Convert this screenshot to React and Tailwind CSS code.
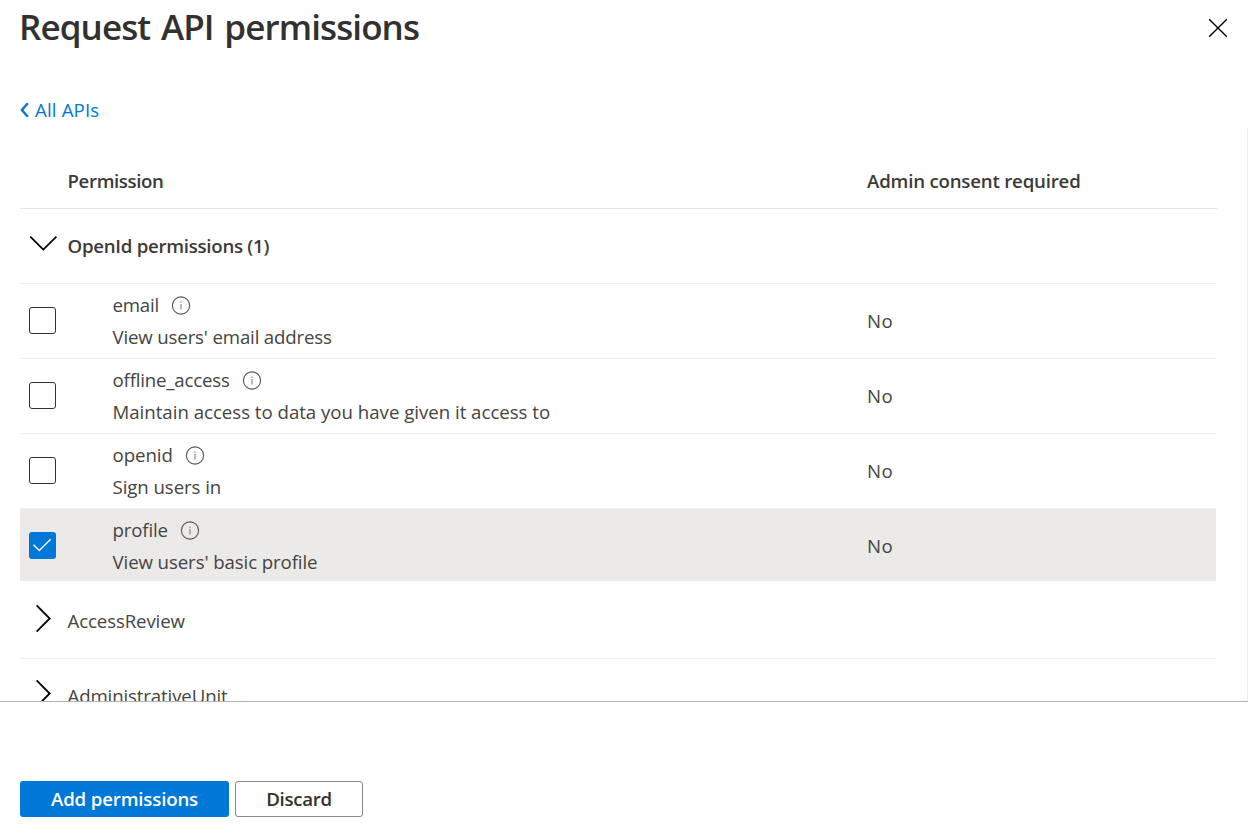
import { useState } from "react";

const scopes = [
  { name: "email", description: "View users' email address", nameClass: "tracking-[-0.2px]", descriptionClass: "tracking-[-0.16px]" },
  { name: "offline_access", description: "Maintain access to data you have given it access to", nameClass: "tracking-[-0.18px]", descriptionClass: "tracking-[-0.02px]" },
  { name: "openid", description: "Sign users in", nameClass: "tracking-[-0.05px]", descriptionClass: "tracking-[-0.08px]" },
  { name: "profile", description: "View users' basic profile", nameClass: "tracking-[-0.15px]", descriptionClass: "tracking-[-0.1px]" },
];

function InfoIcon() {
  return (
    <svg className="mt-px h-5 w-5 shrink-0" viewBox="0 0 20 20" fill="none">
      <circle cx="10" cy="9.5" r="8.6" stroke="#555" strokeWidth="1.1" />
      <path d="M10 8V13.5" stroke="#888" strokeWidth="1.2" />
      <path d="M10 5.4V6.8" stroke="#888" strokeWidth="1.3" />
    </svg>
  );
}

function ChevronRight() {
  return (
    <svg className="h-7 w-4 shrink-0" viewBox="0 0 16 28" fill="none" stroke="#000" strokeWidth="1.8">
      <path d="M0.6 1.4L13.7 14.5L0.6 27.6" />
    </svg>
  );
}

function PermissionRow({ scope, checked, onToggle }) {
  return (
    <div className={checked ? "flex h-[75px] w-[1196px] pb-[3px]" : "flex h-[75px] w-[1196px] border-b border-[#f0f0f0]"}>
      <div className={checked ? "flex w-full bg-[#ebeae8]" : "flex w-full"}>
        <div className="w-[92.5px] pt-[23px] pl-[9px]">
          <button
            type="button"
            role="checkbox"
            aria-checked={checked}
            aria-label={scope.name}
            onClick={onToggle}
            className={
              checked
                ? "flex h-[27px] w-[27px] items-center justify-center rounded-[3px] bg-[#0078d7]"
                : "block h-[27px] w-[27px] rounded-[3px] border border-[#323130] bg-white"
            }
          >
            {checked && (
              <svg className="h-[27px] w-[27px]" viewBox="0 0 27 27" fill="none" stroke="#fff" strokeWidth="1.4">
                <path d="M4.5 12.8L10.3 18.5L21.7 7.2" />
              </svg>
            )}
          </button>
        </div>
        <div className="w-[754.5px] pt-[5px] leading-8">
          <div className="flex h-8 items-center gap-3">
            <span className={scope.nameClass}>{scope.name}</span>
            <InfoIcon />
          </div>
          <div className={scope.descriptionClass}>{scope.description}</div>
        </div>
        <div className="pt-[21px] leading-8 tracking-[0.5px]">No</div>
      </div>
    </div>
  );
}

function ScopeGroup({ label, labelClass }) {
  return (
    <div className="flex h-[75px] w-[1196px] border-b border-[#f0f0f0]">
      <div className="w-[47.5px] pt-[20px] pl-4">
        <ChevronRight />
      </div>
      <div className="pt-[21px] leading-8">
        <span className={labelClass}>{label}</span>
      </div>
    </div>
  );
}

export default function App() {
  const [selected, setSelected] = useState(["profile"]);
  const toggle = (name) =>
    setSelected((s) => (s.includes(name) ? s.filter((n) => n !== name) : [...s, name]));

  return (
    <div className="flex h-[840px] w-[1248px] flex-col overflow-hidden bg-white font-['Open_Sans','Noto_Sans',sans-serif] text-[18.67px] text-[#454443]">
      <header className="flex h-[128px] shrink-0 flex-col px-5">
        <div className="flex h-14 items-center justify-between">
          <h1 className="-mt-0.5 -ml-px text-[35px] leading-[54px] font-semibold tracking-[-0.9px] [word-spacing:2.5px] text-[#323130]">Request API permissions</h1>
          <button type="button" aria-label="Close">
            <svg className="h-5 w-5" viewBox="0 0 20 20" fill="none" stroke="#000" strokeWidth="1.4">
              <path d="M1.2 1.2L18.8 18.8M18.8 1.2L1.2 18.8" />
            </svg>
          </button>
        </div>
        <a href="#apis" className="mt-[38px] flex h-8 items-center gap-[5px] text-[#0078d4]">
          <svg className="h-4 w-2.5" viewBox="0 0 10 16" fill="none" stroke="#0078d4" strokeWidth="2.4">
            <path d="M7.8 1.2L1.9 8L7.8 14.8" />
          </svg>
          <span className="tracking-[0.15px]">All APIs</span>
        </a>
      </header>
      <main className="h-[573px] shrink-0 overflow-hidden border-r border-[#ededed] pl-5">
        <div className="flex h-[81px] w-[1197px] border-b border-[#e6e6e6] pt-[37px] pl-[47.5px] leading-8 font-semibold text-[#3b3a39]">
          <div className="w-[799.5px]"><span className="tracking-[-0.38px]">Permission</span></div>
          <div><span className="tracking-[-0.2px]">Admin consent required</span></div>
        </div>
        <div className="flex h-[75px] w-[1196px] border-b border-[#f0f0f0]">
          <div className="w-[47.5px] pt-[26px] pl-[9px]">
            <svg className="h-4 w-7" viewBox="0 0 28 16" fill="none" stroke="#000" strokeWidth="1.8">
              <path d="M1.3 1.6L14.3 14.6L27.4 1.6" />
            </svg>
          </div>
          <div className="pt-[21px] leading-8 font-semibold text-[#3b3a39]"><span className="tracking-[-0.27px]">OpenId permissions (1)</span></div>
        </div>
        {scopes.map((scope) => (
          <PermissionRow
            key={scope.name}
            scope={scope}
            checked={selected.includes(scope.name)}
            onToggle={() => toggle(scope.name)}
          />
        ))}
        <ScopeGroup label="AccessReview" labelClass="tracking-[-0.13px]" />
        <ScopeGroup label="AdministrativeUnit" labelClass="tracking-[-0.13px]" />
      </main>
      <footer className="flex h-[139px] shrink-0 gap-1.5 border-t border-[#b3b3b3] pt-[79px] pl-5 font-semibold">
        <button type="button" className="h-9 w-[209px] rounded-[3px] bg-[#0078d7] text-white">
          <span className="tracking-[-0.17px]">Add permissions</span>
        </button>
        <button type="button" className="h-9 w-[128px] rounded-[3px] border border-[#8a8886] text-[#323130]">
          <span className="tracking-[-0.3px]">Discard</span>
        </button>
      </footer>
    </div>
  );
}
